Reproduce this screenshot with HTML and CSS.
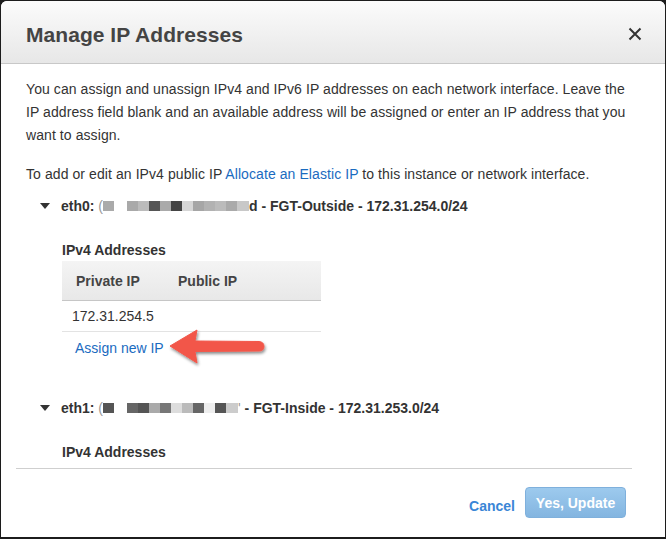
FILE: index.html
```html
<!DOCTYPE html>
<html>
<head>
<meta charset="utf-8">
<link rel="stylesheet" href="styles.css">
</head>
<body>
<div class="dialog">
  <div class="header">
    <h1 class="title">Manage IP Addresses</h1>
    <svg class="close" width="14" height="14" viewBox="0 0 14 14"><path d="M1.5 1.5 L12.5 12.5 M12.5 1.5 L1.5 12.5" stroke="#333" stroke-width="2" fill="none"/></svg>
  </div>
  <div class="body">
    <p class="intro">You can assign and unassign IPv4 and IPv6 IP addresses on each network interface. Leave the IP address field blank and an available address will be assigned or enter an IP address that you want to assign.</p>
    <p class="intro2">To add or edit an IPv4 public IP <a class="link">Allocate an Elastic IP</a> to this instance or network interface.</p>

    <div class="iface">
      <div class="iface-head">
        <span class="caret"></span>
        <span class="iface-name">eth0: <span class="cut">(</span><span class="px" style="background:#aaa"></span><span class="gap"></span><span class="px" style="background:#a9a9a9"></span><span class="px" style="background:#bbb"></span><span class="px" style="background:#555"></span><span class="px" style="background:#aaa"></span><span class="px" style="background:#444"></span><span class="px" style="background:#d6d6d6"></span><span class="px" style="background:#a6a6a6"></span><span class="px" style="background:#b2b2b2"></span><span class="px" style="background:#bbb"></span><span class="px" style="background:#aaa"></span><span class="px last" style="background:#c8c8c8"></span>d - FGT-Outside - 172.31.254.0/24</span>
      </div>
      <div class="section-label">IPv4 Addresses</div>
      <div class="table">
        <div class="thead">
          <span class="th th-private">Private IP</span>
          <span class="th">Public IP</span>
        </div>
        <div class="trow">
          <span class="td">172.31.254.5</span>
        </div>
      </div>
      <div class="assign-wrap">
        <a class="link assign">Assign new IP</a>
        <svg class="arrow" width="110" height="44" viewBox="0 0 110 44">
          <defs>
            <filter id="sh" x="-20%" y="-30%" width="140%" height="160%">
              <feDropShadow dx="1" dy="2" stdDeviation="1.5" flood-color="#000" flood-opacity="0.45"/>
            </filter>
          </defs>
          <path d="M3 19 L30 3 L28 14 L92 14.5 Q97 15 97 19.5 Q97 24 92 24 L28 24.5 L30 36 Z" fill="#f2574a" stroke="#f2574a" stroke-width="1" stroke-linejoin="round" filter="url(#sh)"/>
        </svg>
      </div>
    </div>

    <div class="iface iface2">
      <div class="iface-head">
        <span class="caret"></span>
        <span class="iface-name">eth1: <span class="cut">(</span><span class="px" style="background:#555"></span><span class="gap"></span><span class="px" style="background:#666"></span><span class="px" style="background:#555"></span><span class="px" style="background:#aaa"></span><span class="px" style="background:#777"></span><span class="px" style="background:#ddd"></span><span class="px" style="background:#bbb"></span><span class="px" style="background:#666"></span><span class="px" style="background:#eee"></span><span class="px" style="background:#555"></span><span class="px last" style="background:#ccc"></span><span class="cut">'</span> - FGT-Inside - 172.31.253.0/24</span>
      </div>
      <div class="section-label">IPv4 Addresses</div>
    </div>
  </div>
  <div class="footer">
    <a class="cancel">Cancel</a>
    <button class="primary">Yes, Update</button>
  </div>
</div>
</body>
</html>
```
FILE: styles.css
```css
* { box-sizing: border-box; }
html, body { margin: 0; padding: 0; }
body {
  background: #1c1c1c;
  width: 666px;
  height: 539px;
  overflow: hidden;
  font-family: "Liberation Sans", Arial, Helvetica, sans-serif;
  color: #333;
}
.dialog {
  margin: 1px 1px 0 1px;
  width: 664px;
  height: 536px;
  background: #fff;
  border-radius: 6px 6px 0 0;
  display: flex;
  flex-direction: column;
  overflow: hidden;
}
.header {
  height: 63px;
  flex: none;
  background: linear-gradient(#fbfbfb, #e7e7e7);
  border-bottom: 1px solid #c8c8c8;
  display: flex;
  align-items: center;
  justify-content: space-between;
  padding: 0 23px 0 25px;
}
.title {
  margin: 0;
  font-size: 21px;
  font-weight: bold;
  color: #444;
  letter-spacing: 0.05px;
  padding-top: 6px;
}
.close { margin-top: 4px; }
.body {
  height: 404px;
  flex: none;
  overflow: hidden;
  padding: 14px 26px 0 25px;
  font-size: 14px;
  letter-spacing: 0.08px;
}
.intro, .intro2 {
  margin: 0;
  line-height: 23px;
}
.intro2 { margin-top: 16px; }
.link { color: #1a6bbf; text-decoration: none; }
.iface { margin-left: 14px; letter-spacing: 0; }
.iface-head {
  margin-top: 10px;
  display: flex;
  align-items: center;
  height: 20px;
  font-weight: bold;
  font-size: 14px;
  color: #333;
}
.caret {
  width: 0; height: 0;
  border-left: 5px solid transparent;
  border-right: 5px solid transparent;
  border-top: 6px solid #333;
  margin-right: 11px;
}
.iface-name { display: flex; align-items: center; white-space: pre; }
.cut { color: #999; font-weight: normal; }
.px { display: inline-block; width: 11px; height: 10px; }
.px.last { width: 12px; }
.gap { display: inline-block; width: 13px; }
.section-label {
  margin-top: 26px;
  margin-left: 22px;
  font-weight: bold;
  font-size: 14px;
  color: #333;
}
.table {
  margin-left: 22px;
  margin-top: 3px;
  width: 259px;
}
.thead {
  height: 40px;
  background: linear-gradient(#f4f4f4, #e8e8e8);
  border-bottom: 1px solid #c6c6c6;
  display: flex;
  align-items: center;
  padding-left: 14px;
}
.th { font-weight: bold; font-size: 14px; color: #444; }
.th-private { width: 102px; }
.trow {
  height: 31px;
  border-bottom: 1px solid #e3e3e3;
  display: flex;
  align-items: center;
  padding-left: 10px;
}
.td { font-size: 14px; color: #333; }
.assign-wrap {
  position: relative;
  margin-left: 35px;
  height: 32px;
  display: flex;
  align-items: center;
}
.assign { font-size: 14px; }
.arrow {
  position: absolute;
  left: 92px;
  top: -5px;
}
.iface2 { margin-top: 34px; }
.iface2 .section-label { margin-top: 26px; }
.footer {
  flex: 1;
  margin: 0 33px 0 15px;
  border-top: 1px solid #cfcfcf;
  display: flex;
  justify-content: flex-end;
  align-items: flex-start;
  padding-top: 18px;
  padding-right: 6px;
}
.cancel {
  font-weight: bold;
  font-size: 14px;
  color: #3a86d6;
  margin-top: 11px;
  margin-right: 10px;
}
.primary {
  width: 101px;
  height: 31px;
  border: 1px solid #7fb0dc;
  border-radius: 4px;
  background: linear-gradient(#9dcaee, #83b5e0);
  color: #fff;
  font-family: "Liberation Sans", Arial, sans-serif;
  font-weight: bold;
  font-size: 14px;
  padding: 0;
}
```
